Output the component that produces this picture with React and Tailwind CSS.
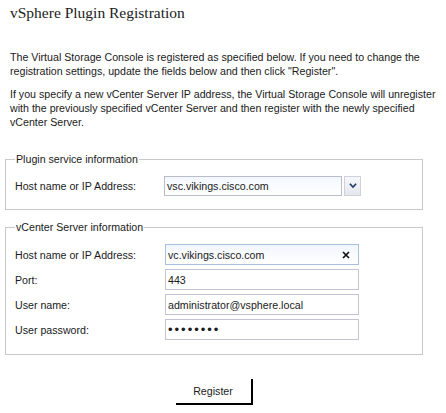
import React from "react";

const Row = ({ label, labelWidth, children }) => (
  <div className="flex items-center">
    <span className={labelWidth}>{label}</span>
    {children}
  </div>
);

const App = () => {
  return (
    <div className="w-[446px] h-[413px] bg-white text-[#1a1a1a] font-['Liberation_Sans',Arial,sans-serif] text-[10.65px] leading-[14px]">
      {/* Title */}
      <h1 className="pl-[10px] pt-[4px] font-['Liberation_Serif','Times_New_Roman',serif] text-[15.5px] leading-[18px] text-[#222]">
        vSphere Plugin Registration
      </h1>

      {/* Intro text */}
      <p className="pl-[10px] mt-[28px] whitespace-nowrap">
        The Virtual Storage Console is registered as specified below. If you need to change the
        <br />
        registration settings, update the fields below and then click "Register".
      </p>
      <p className="pl-[10px] mt-[9px] whitespace-nowrap">
        If you specify a new vCenter Server IP address, the Virtual Storage Console will unregister
        <br />
        with the previously specified vCenter Server and then register with the newly specified
        <br />
        vCenter Server.
      </p>

      {/* Plugin service */}
      <fieldset className="ml-[5px] mt-[23px] w-[418px] border border-[#c9c9c9] pl-[9px] pb-[13px]">
        <legend className="px-[1px] leading-[14px]">Plugin service information</legend>
        <div className="mt-[10px]">
          <Row label="Host name or IP Address:" labelWidth="w-[149px]">
            <div className="w-[178px] h-[20px] border border-[#b9bccb] bg-gradient-to-b from-[#f3f7fd] to-white flex items-center pl-[2px]">
              vsc.vikings.cisco.com
            </div>
            <div className="ml-[2px] w-[17px] h-[20px] border border-[#cfd2da] bg-gradient-to-b from-[#f7f8fa] to-[#e4e7ec] flex items-center justify-center">
              <svg width="8" height="6" viewBox="0 0 8 6">
                <path d="M0.3 1.2 L4 5.2 L7.7 1.2 L6.4 0.3 L4 2.9 L1.6 0.3 Z" fill="#1f3a68" />
              </svg>
            </div>
          </Row>
        </div>
      </fieldset>

      {/* vCenter server */}
      <fieldset className="ml-[5px] mt-[10px] w-[418px] border border-[#c9c9c9] pl-[9px] pb-[14px]">
        <legend className="px-[1px] leading-[14px]">vCenter Server information</legend>
        <div className="mt-[10px] flex flex-col gap-[4px]">
          <Row label="Host name or IP Address:" labelWidth="w-[150px]">
            <div className="w-[194px] h-[21px] border border-[#a9bfdc] bg-gradient-to-b from-[#f1f6fd] to-white flex items-center justify-between pl-[2px] pr-[8px]">
              <span>vc.vikings.cisco.com</span>
              <svg width="8" height="8" viewBox="0 0 8 8">
                <path d="M1 1 L7 7 M7 1 L1 7" stroke="#111" strokeWidth="1.7" />
              </svg>
            </div>
          </Row>
          <Row label="Port:" labelWidth="w-[150px]">
            <div className="w-[194px] h-[21px] border border-[#c3c3d3] bg-white flex items-center pl-[2px]">443</div>
          </Row>
          <Row label="User name:" labelWidth="w-[150px]">
            <div className="w-[194px] h-[21px] border border-[#c3c3d3] bg-white flex items-center pl-[2px]">
              administrator@vsphere.local
            </div>
          </Row>
          <Row label="User password:" labelWidth="w-[150px]">
            <div className="w-[194px] h-[21px] border border-[#c3c3d3] bg-white flex items-center pl-[2px]">
              <span className="text-[13px] tracking-[2px] leading-none">••••••••</span>
            </div>
          </Row>
        </div>
      </fieldset>

      {/* Register */}
      <div className="ml-[5px] w-[418px] mt-[24px] flex justify-center">
        <button className="w-[77px] h-[26px] border-r-2 border-b-2 border-black bg-white text-[10.65px] text-[#1a1a1a]">
          Register
        </button>
      </div>
    </div>
  );
};

export default App;
